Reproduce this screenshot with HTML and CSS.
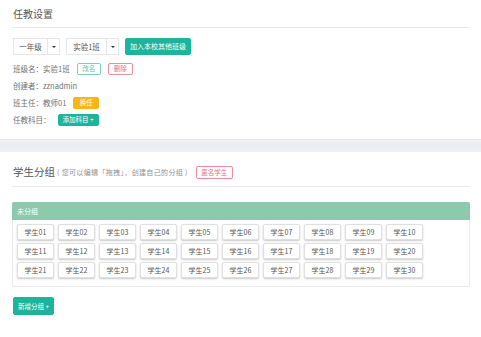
FILE: index.html
```html
<!DOCTYPE html>
<html lang="zh">
<head>
<meta charset="utf-8">
<link rel="stylesheet" href="styles.css">
</head>
<body>
<section class="panel top">
  <div class="panel-title">任教设置</div>
  <div class="controls">
    <div class="select"><span class="sel-text">一年级</span><span class="sel-caret"></span></div>
    <div class="select"><span class="sel-text">实验1班</span><span class="sel-caret"></span></div>
    <button class="btn btn-primary btn-mid">加入本校其他班级</button>
  </div>
  <div class="info-row">班级名：实验1班<button class="btn btn-outline-teal">改名</button><button class="btn btn-outline-red">删除</button></div>
  <div class="info-row">创建者：zznadmin</div>
  <div class="info-row">班主任：教师01<button class="btn btn-warning">换任</button></div>
  <div class="info-row">任教科目：<button class="btn btn-primary btn-xs-fill">添加科目 +</button></div>
</section>
<div class="band"></div>
<section class="panel bottom">
  <div class="panel-title title2"><span class="t2">学生分组</span><span class="hint">( 您可以编辑「拖拽」，创建自己的分组 )</span><button class="btn btn-outline-red anon">匿名学生</button></div>
  <div class="group">
    <div class="group-head">未分组</div>
    <div class="group-body">
      <span class="stu">学生01</span><span class="stu">学生02</span><span class="stu">学生03</span><span class="stu">学生04</span><span class="stu">学生05</span><span class="stu">学生06</span><span class="stu">学生07</span><span class="stu">学生08</span><span class="stu">学生09</span><span class="stu">学生10</span>
      <span class="stu">学生11</span><span class="stu">学生12</span><span class="stu">学生13</span><span class="stu">学生14</span><span class="stu">学生15</span><span class="stu">学生16</span><span class="stu">学生17</span><span class="stu">学生18</span><span class="stu">学生19</span><span class="stu">学生20</span>
      <span class="stu">学生21</span><span class="stu">学生22</span><span class="stu">学生23</span><span class="stu">学生24</span><span class="stu">学生25</span><span class="stu">学生26</span><span class="stu">学生27</span><span class="stu">学生28</span><span class="stu">学生29</span><span class="stu">学生30</span>
    </div>
  </div>
  <button class="btn btn-primary btn-add">新增分组 +</button>
</section>
</body>
</html>
```
FILE: styles.css
```css
* { box-sizing: border-box; }
html, body { margin: 0; padding: 0; background: #fff; }
body {
  font-family: "Noto Sans CJK SC", "Noto Sans", sans-serif;
  color: #6f7274;
  font-size: 7.5px;
  width: 481px;
  height: 337px;
  overflow: hidden;
}
.panel { padding: 0 11px 0 12px; }
.top { padding-top: 7px; padding-bottom: 11px; }
.panel-title {
  font-size: 10px;
  line-height: 14px;
  color: #5a5a5a;
  padding: 0 0 6px 1px;
  border-bottom: 1px solid #e7eaec;
}
.controls {
  display: flex;
  align-items: center;
  margin-top: 10px;
  margin-left: 1px;
  height: 17px;
}
.select {
  display: flex;
  height: 17px;
  border: 1px solid #e5e6e7;
  background: #fff;
  margin-right: 6px;
}
.sel-text {
  display: flex; align-items: center; justify-content: center;
  padding: 0 5px;
  border-right: 1px solid #e5e6e7;
  font-size: 7.5px;
  color: #555;
  min-width: 34px;
}
.select:nth-child(2) .sel-text { min-width: 40px; }
.sel-caret {
  width: 11px;
  display: flex; align-items: center; justify-content: center;
}
.sel-caret::after {
  content: "";
  border-left: 2px solid transparent;
  border-right: 2px solid transparent;
  border-top: 2px solid #333;
}
.btn {
  font-family: inherit;
  border: 1px solid transparent;
  border-radius: 2px;
  padding: 0;
  margin: 0;
  cursor: pointer;
  display: inline-flex;
  align-items: center;
  justify-content: center;
  line-height: 1;
}
.btn-primary { background: #1eb39b; color: #fff; border-color: #1eb39b; }
.btn-mid { height: 17px; font-size: 7px; width: 66px; }
.info-row {
  display: flex;
  align-items: center;
  height: 17px;
  margin-left: 1px;
}
.controls + .info-row { margin-top: 5px; }
.info-row .btn { margin-left: 7px; height: 12px; font-size: 6.5px; }
.info-row .btn + .btn { margin-left: 7px; }
.btn-outline-teal { background: #fff; border-color: #7fcfc1; color: #5bbfb0; width: 24px; }
.btn-outline-red { background: #fff; border-color: #ef8d96; color: #e9707a; width: 25px; }
.btn-warning { background: #f6b619; color: #fff; border-color: #f6b619; width: 26px; }
.btn-xs-fill { width: 41px; }
.band {
  height: 13px;
  background: linear-gradient(#f1f3f5, #e9ecf0 40%, #eef1f4);
  border-top: 1px solid #e6e9ec;
}
.bottom { padding-top: 11px; }
.title2 {
  display: flex;
  align-items: center;
  height: 24px;
  padding-bottom: 5px;
  line-height: 18px;
}
.t2 { font-size: 10.5px; color: #555; }
.hint { font-size: 7px; letter-spacing: 0.35px; color: #8f9193; margin-left: 2px; }
.anon { height: 13px; width: 37px; font-size: 6.5px; margin-left: 8px; }
.group {
  margin-top: 15px;
  border: 1px solid #e7eaec;
  border-top: 0;
  border-radius: 2px;
}
.group-head {
  background: #8ccaae;
  color: #fff;
  height: 18px;
  line-height: 18px;
  font-size: 7px;
  padding-left: 5px;
  border-radius: 2px 2px 0 0;
  margin: 0 -1px;
}
.group-body {
  display: grid;
  grid-template-columns: repeat(10, 37px);
  column-gap: 4px;
  row-gap: 3px;
  padding: 4px 4px 8px 4px;
}
.stu {
  height: 16px;
  display: flex;
  align-items: center;
  justify-content: center;
  font-size: 7px;
  color: #555;
  background: #fff;
  border: 1px solid #e0e0e0;
  border-radius: 2px;
  box-shadow: 0 1px 2px rgba(0,0,0,0.22);
}
.btn-add {
  margin-top: 10px;
  margin-left: 1px;
  height: 18px;
  width: 41px;
  font-size: 6.5px;
}
```
